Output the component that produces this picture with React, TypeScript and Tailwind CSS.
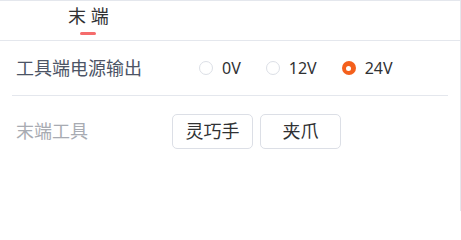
const font = { fontFamily: '"Noto Sans", "Noto Sans CJK SC", sans-serif' }

const voltages = ['0V', '12V', '24V']

function Radio({ label, checked }: { label: string; checked?: boolean }) {
  return (
    <label className="flex items-center gap-[9px] mr-[25px]">
      {checked ? (
        <span className="w-[14px] h-[14px] rounded-full bg-[#f4601c] flex items-center justify-center">
          <span className="w-[5px] h-[5px] rounded-full bg-white" />
        </span>
      ) : (
        <span className="w-[14px] h-[14px] rounded-full border border-[#dcdfe6] bg-white" />
      )}
      <span className="text-[16px] text-[#303133] leading-none">{label}</span>
    </label>
  )
}

export default function App() {
  return (
    <div
      className="w-[461px] h-[211px] bg-white border-t border-r border-[#e4e7ed] overflow-hidden"
      style={font}
    >
      {/* Tabs */}
      <div className="h-[40px] border-b border-[#e4e7ed] pl-[68px] flex">
        <div className="relative flex items-start pt-[3px]">
          <span className="text-[18px] leading-[24px] text-[#303133]">末 端</span>
          <span className="absolute left-[12px] top-[31px] w-[16px] h-[3px] rounded-full bg-[#f56c6c]" />
        </div>
      </div>

      <div className="px-3">
        {/* Power output */}
        <div className="h-[55px] border-b border-[#e4e7ed] flex items-center pl-1">
          <span className="w-[183px] text-[18px] text-[#4c5466]">工具端电源输出</span>
          <div className="flex items-center">
            {voltages.map((v) => (
              <Radio key={v} label={v} checked={v === '24V'} />
            ))}
          </div>
        </div>

        {/* End tool */}
        <div className="flex items-center pl-1 pt-[18px]">
          <span className="w-[156px] text-[18px] text-[#a8abb2]">末端工具</span>
          <div className="flex gap-[7px]">
            <button className="w-[81px] h-[35px] rounded-[5px] border border-[#dcdfe6] bg-white text-[18px] text-[#303133]">
              灵巧手
            </button>
            <button className="w-[81px] h-[35px] rounded-[5px] border border-[#dcdfe6] bg-white text-[18px] text-[#303133]">
              夹爪
            </button>
          </div>
        </div>
      </div>
    </div>
  )
}
